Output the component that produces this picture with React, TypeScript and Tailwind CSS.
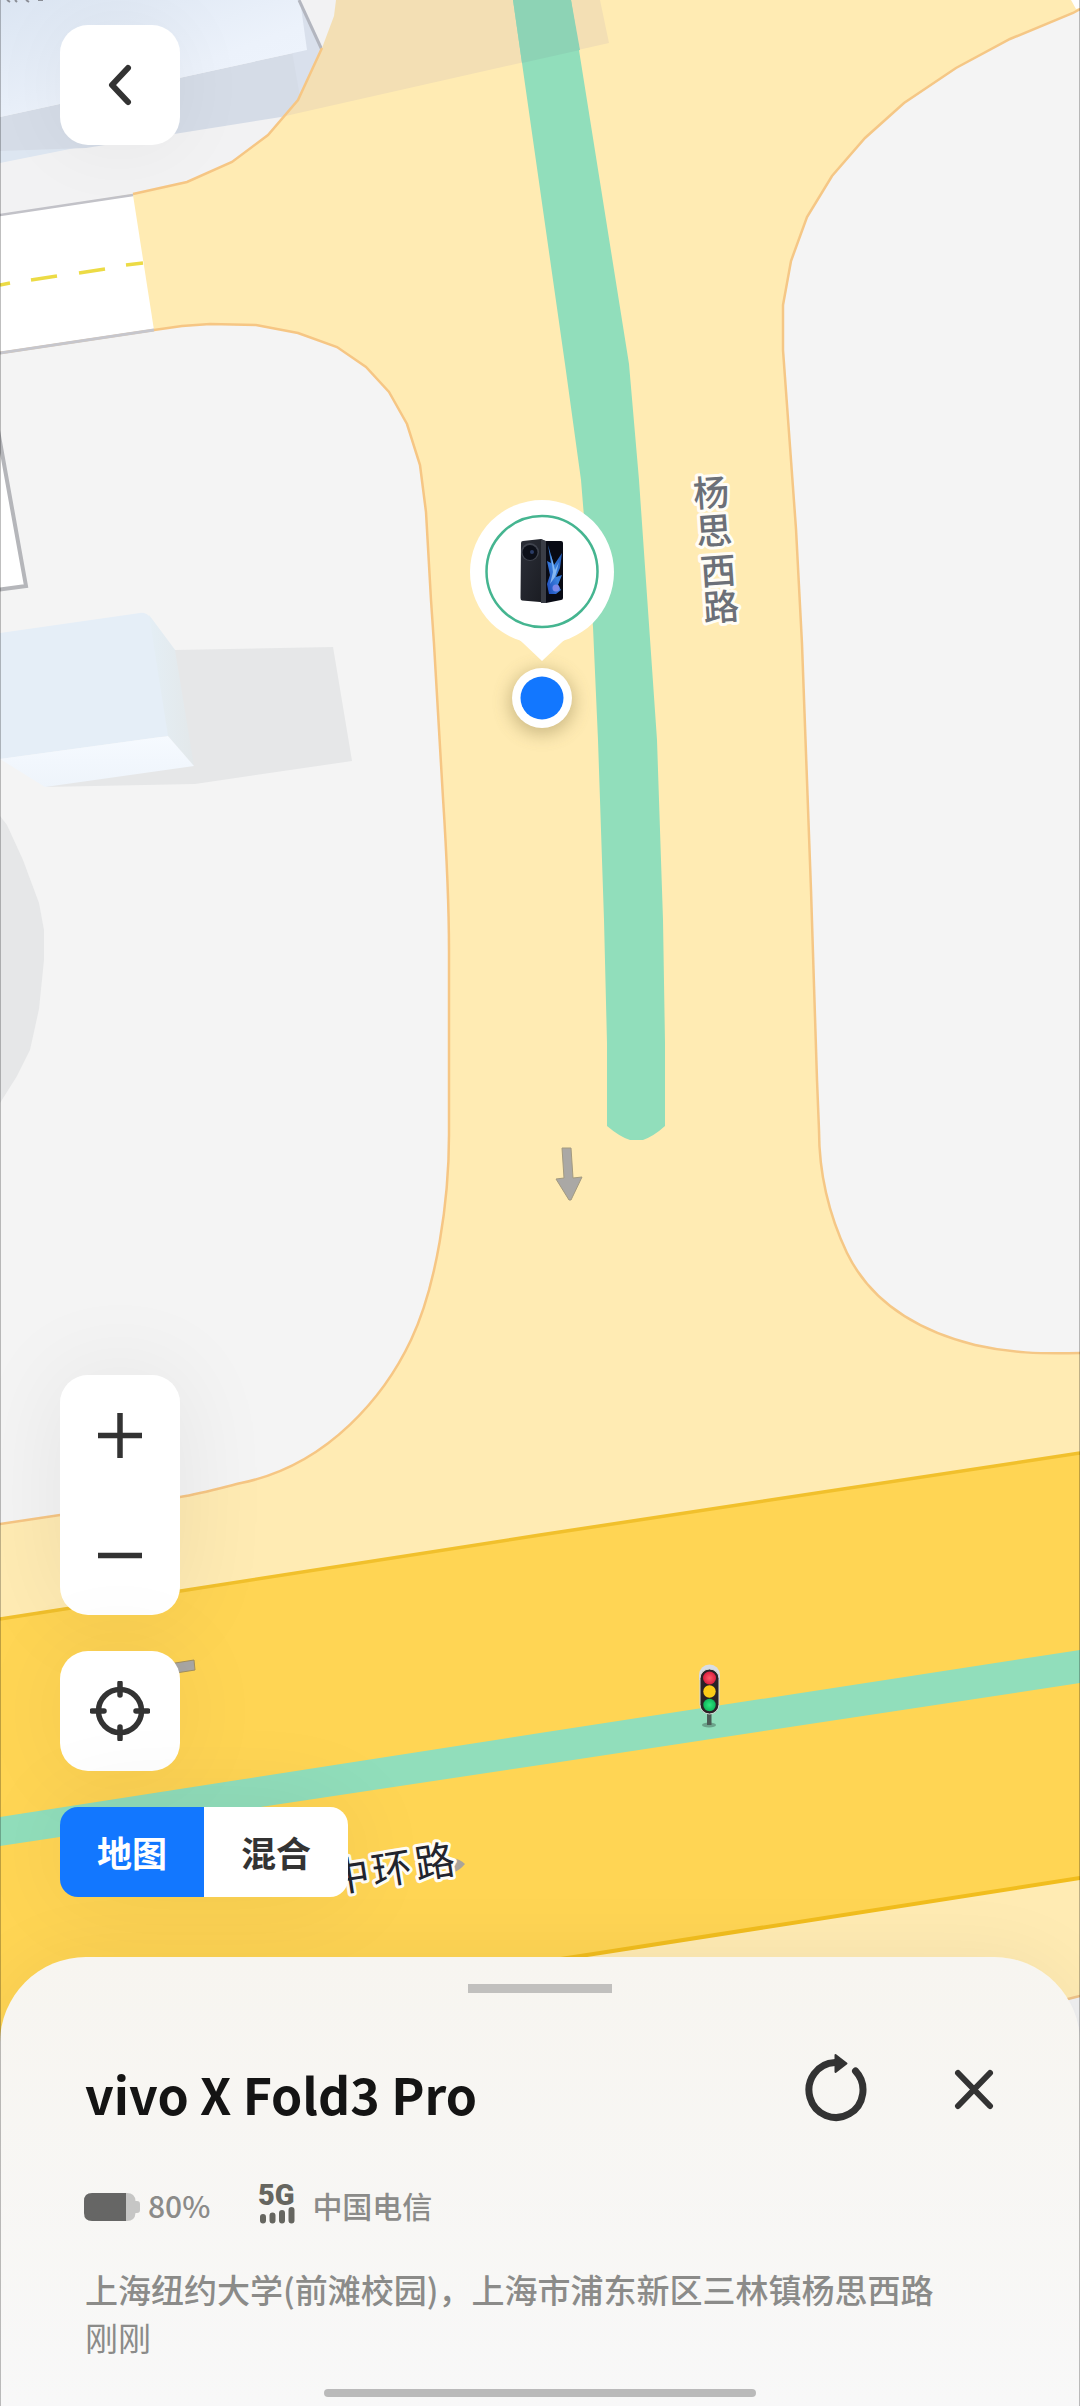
import { useState } from "react";

const LEFT_BLOCK =
  "M0 353 L154 330 L182 326 L210 324 L256 325 L298 333 L337 347 L366 367 L389 392 L407 424 L420 465 L426 512 L431 600 L434 644 L443 798 C447 860 449 900 449 951 V1135 C449 1200 437 1285 411 1340 C386 1393 330 1465 241 1483 C221 1488 200 1494 180 1497 L0 1524";
const RIGHT_BLOCK =
  "M1080 9 L1073 13 L1010 39 L956 68 L904 103 L865 138 L832 176 L807 217 L791 261 L783 305 L783 350 L796 529 L802 644 L811 890 L817 1080 L819 1130 C819 1175 829 1215 847 1253 C870 1300 915 1330 975 1345 C1010 1353 1040 1354 1080 1353";
const TOP_BLOCK_EDGE =
  "M336 0 L334 16 L322 48 L298 100 L268 135 L232 162 L187 182 L133 194";

function StreetMap() {
  return (
    <svg
      className="absolute inset-0 h-full w-full"
      viewBox="0 0 1080 2406"
      preserveAspectRatio="xMidYMin slice"
      role="img"
      aria-label="地图"
    >
      <defs>
        <linearGradient id="roof" x1="0" y1="0" x2="1" y2="1">
          <stop offset="0" stopColor="#dbe5f2" />
          <stop offset="0.6" stopColor="#ecf2fb" />
          <stop offset="1" stopColor="#eff5fe" />
        </linearGradient>
        <linearGradient id="wall" x1="0" y1="0" x2="1" y2="0">
          <stop offset="0" stopColor="#e4eef5" />
          <stop offset="1" stopColor="#e3e8ea" />
        </linearGradient>
        <linearGradient id="front" x1="0" y1="0" x2="0" y2="1">
          <stop offset="0" stopColor="#f6faff" />
          <stop offset="1" stopColor="#eef4fb" />
        </linearGradient>
        <linearGradient id="phoneBack" x1="0" y1="0" x2="1" y2="1">
          <stop offset="0" stopColor="#2c2f38" />
          <stop offset="1" stopColor="#191b21" />
        </linearGradient>
        <linearGradient id="wing" x1="1" y1="0" x2="0" y2="1">
          <stop offset="0" stopColor="#1c4fb0" />
          <stop offset="0.5" stopColor="#3b83e0" />
          <stop offset="1" stopColor="#1b46b8" />
        </linearGradient>
        <radialGradient id="lampRed">
          <stop offset="0" stopColor="#ff5a68" />
          <stop offset="1" stopColor="#dc1f3f" />
        </radialGradient>
        <radialGradient id="lampGreen">
          <stop offset="0" stopColor="#2fe87f" />
          <stop offset="1" stopColor="#0fb65c" />
        </radialGradient>
        <filter id="soft" x="-50%" y="-50%" width="200%" height="200%">
          <feGaussianBlur stdDeviation="9" />
        </filter>
        <clipPath id="topBlock">
          <path d={`${TOP_BLOCK_EDGE} L0 215 V0 Z`} />
        </clipPath>
      </defs>

      <rect width="1080" height="2406" fill="#ffebb3" />

      {/* shadow cast over the junction */}
      <path d="M330 0 H600 L609 43 L281 117 L240 100 Z" fill="#f3dfb4" />

      {/* north-west block and its tower */}
      <path d={`${TOP_BLOCK_EDGE} L0 215 V0 Z`} fill="#f2f2f3" />
      <g clipPath="url(#topBlock)">
        <path d="M0 150 L90 145 L0 163 Z" fill="#dde6f1" />
        <path d="M0 117 L307 50 L322 48 L340 104 L281 117 L86 148 L0 151 Z" fill="#d5dce7" />
        <path d="M300 0 L322 50 L300 97 L290 40 Z" fill="#d9e0ec" />
        <path d="M0 0 H300 L307 50 L0 117 Z" fill="url(#roof)" />
        <path d="M299 0 L322 50" stroke="#b3b6bf" strokeWidth="3" />
      </g>
      <path d="M322 48 L298 100 L268 135 L232 162 L187 182 L133 194" fill="none" stroke="#f6c684" strokeWidth="2.5" />
      <path d="M7 0 l3 2 M15 0 l2 2 M26 0 l3 2 M38 0 h5" stroke="#8b8e96" strokeWidth="2" />

      {/* side street */}
      <path d="M0 215 L133 195 L154 330 L0 353 Z" fill="#ffffff" />
      <path d="M0 215 L133 195" stroke="#c2c2c8" strokeWidth="2.5" />
      <path d="M0 285 L10 283 M31 280 L57 276 M79 273 L105 269 M126 265 L143 263" stroke="#ecdb45" strokeWidth="3.5" />

      {/* west block */}
      <path d={`${LEFT_BLOCK} Z`} fill="#f4f4f4" />
      <path d={LEFT_BLOCK} fill="none" stroke="#f6c684" strokeWidth="2.5" />
      <path d="M0 353 L154 330" stroke="#c6c6cc" strokeWidth="3" />
      <path d="M-3 425 L26 586 L-3 590 Z" fill="#ffffff" stroke="#b5b6ba" strokeWidth="4" />

      <path d="M175 650 L333 647 L352 761 L195 784 L45 787 L160 740 Z" fill="#e6e7e8" />
      <path d="M0 633 L140 613 Q146 612 151 618 L175 650 L168 736 L0 759 Z" fill="#e5eef7" />
      <path d="M149 615 L175 650 L194 766 L168 736 Z" fill="url(#wall)" />
      <path d="M0 759 L168 736 L194 766 L45 787 Z" fill="url(#front)" />
      <path d="M0 816 L7 825 L23 860 L39 903 L44 930 V960 L39 1009 L30 1050 L17 1076 L0 1103 Z" fill="#e6e7e8" />

      {/* east block */}
      <path d="M1071 0 L1076 9 L1080 8 V0 Z" fill="#ffffff" />
      <path d={`${RIGHT_BLOCK} Z`} fill="#f4f4f4" />
      <path d={RIGHT_BLOCK} fill="none" stroke="#f5c786" strokeWidth="2.5" />
      <path d="M1060 2001 L1080 1996 V2100 H1060 Z" fill="#f1f1f2" />
      <path d="M1060 2001 L1080 1996" stroke="#f0c48a" strokeWidth="2.5" />

      {/* ring road */}
      <path d="M0 1619 L540 1535 L1080 1453 V1878 L0 2045 Z" fill="#ffd554" />
      <path d="M0 1619 L540 1535 L1080 1453" fill="none" stroke="#f1c02c" strokeWidth="3.5" />
      <path d="M0 2044 L600 1953 L1080 1878" fill="none" stroke="#f1bd1d" strokeWidth="4" />
      <path d="M0 1817 L540 1733 L1080 1650 V1683 L540 1765 L0 1846 Z" fill="#91debb" />

      {/* traffic on the north-south road */}
      <path
        d="M513 0 L565 364 L581 480 L593 627 L598 740 L604 920 L607 1043 V1126 Q620 1137 630 1140 H643 Q654 1136 665 1126 V1043 L663 920 L657 740 L639 480 L629 364 L571 0 Z"
        fill="#91debb"
      />
      <path d="M513 0 H571 L580 50 L522 63 Z" fill="#8dd3b5" />

      {/* direction arrows */}
      <path d="M562 1148 L571 1148 L573 1178 L582 1177 L571 1200 H569 L556 1179 L564 1178 Z" fill="#aaa8a5" stroke="#a39a80" />
      <path d="M150 1667 L194 1660 L195 1670 L151 1677 Z" fill="#a9a7a5" stroke="#a39060" />
      <path d="M452 1858 Q460 1859 465 1864 Q460 1870 453 1873 Z" fill="#aaa49a" />

      {/* street names */}
      <g
        className="text-[36px] font-medium"
        fontFamily="'Noto Sans CJK SC', sans-serif"
        textAnchor="middle"
        fill="#6c7078"
        stroke="#fffdf6"
        strokeWidth="6"
        strokeLinejoin="round"
        paintOrder="stroke"
      >
        <text transform="translate(712 506) rotate(-4)">杨</text>
        <text transform="translate(715 544) rotate(-4)">思</text>
        <text transform="translate(719 584) rotate(-4)">西</text>
        <text transform="translate(722 620) rotate(-4)">路</text>
      </g>
      <g
        className="text-[40px]"
        fontFamily="'Noto Sans CJK SC', sans-serif"
        textAnchor="middle"
        fill="#22252e"
        stroke="#fffdf6"
        strokeWidth="6"
        strokeLinejoin="round"
        paintOrder="stroke"
      >
        <text transform="translate(352 1890) rotate(-9)">中</text>
        <text transform="translate(394 1883) rotate(-9)">环</text>
        <text transform="translate(437 1876) rotate(-9)">路</text>
      </g>

      {/* traffic light */}
      <ellipse cx="709" cy="1725" rx="7" ry="2.5" fill="#5d8a76" opacity="0.7" />
      <rect x="707" y="1712" width="4.5" height="13" fill="#4b5b55" />
      <path d="M699 1680 V1675 A10.5 10.5 0 0 1 720 1675 V1680 Z" fill="#d9dde3" />
      <rect x="700" y="1669" width="19" height="45" rx="9.5" fill="#2a2226" stroke="#d5dcd8" strokeWidth="1" />
      <circle cx="709.5" cy="1678" r="6.5" fill="url(#lampRed)" />
      <circle cx="709.5" cy="1691.5" r="6.2" fill="#fccb17" />
      <circle cx="709.5" cy="1705" r="6.2" fill="url(#lampGreen)" />

      {/* device pin */}
      <circle cx="542" cy="702" r="32" fill="#7a6a3a" opacity="0.4" filter="url(#soft)" />
      <circle cx="542" cy="572" r="72" fill="#ffffff" />
      <path d="M508 633 Q517 637 523 643 L542 661 L561 643 Q567 637 576 633 Z" fill="#ffffff" />
      <circle cx="542" cy="571.5" r="55.5" fill="none" stroke="#45b590" strokeWidth="2.5" />
      <circle cx="542" cy="698" r="30" fill="#ffffff" />
      <circle cx="542" cy="698" r="21.5" fill="#1277ff" />

      <path d="M521 543 Q521 541 523 541 L541 539 L545 541 V603 L540 602 L522 600.5 Q520.5 600 520.5 598 Z" fill="url(#phoneBack)" />
      <path d="M541 539 L546 541 V603 L541 603 Z" fill="#3a3d46" />
      <path d="M546 541 H561 Q563 541 563 543 V598 Q563 600 561 600 L546 603 Z" fill="#080a14" />
      <circle cx="530" cy="552" r="9" fill="#3f434d" />
      <circle cx="530" cy="552.5" r="7.5" fill="#0c0f18" />
      <circle cx="532" cy="552" r="2" fill="#2b3c66" />
      <path d="M548 545 L554 565 L562 553 L560 568 L556 577 L562 575 L558 585 L561 590 L556 594 L549 594 L547 584 L550 575 L547 561 L551 563 Z" fill="url(#wing)" />
      <path d="M551 555 L555 570 L559 562 L555 577 L550 584 L553 572 Z" fill="#a7d2fb" opacity="0.7" />
      <circle cx="556" cy="588" r="3.5" fill="#7b87e8" />
    </svg>
  );
}

const card = "flex items-center justify-center bg-white text-[#333333]";

export default function App() {
  const [mode, setMode] = useState("map");
  const tab = (on: boolean) =>
    on ? "flex-1 bg-[#1277ff] text-white" : "flex-1 bg-white text-[#333333]";

  return (
    <main className="relative flex min-h-screen flex-col overflow-hidden bg-[#ffebb3] font-['Noto_Sans_CJK_SC',sans-serif]">
      <StreetMap />

      <header className="relative px-[60px] pt-[25px]">
        <button type="button" aria-label="返回" className={`${card} size-[120px] rounded-[28px] shadow-[0_0_80px_rgba(0,0,0,0.05)]`}>
          <svg width="30" height="44" viewBox="0 0 30 44" fill="none" stroke="currentColor" strokeWidth="6" strokeLinecap="round" strokeLinejoin="round">
            <path d="M23 5 L7 22 L23 39" />
          </svg>
        </button>
      </header>

      <div className="relative mt-auto flex flex-col items-start gap-9 px-[60px] pb-[60px]">
        <div className="flex w-[120px] flex-col overflow-hidden rounded-[28px] shadow-[0_0_100px_rgba(0,0,0,0.07)]">
          <button type="button" aria-label="放大" className={`${card} h-[120px]`}>
            <svg width="46" height="46" viewBox="0 0 46 46" stroke="currentColor" strokeWidth="5.5">
              <path d="M1 23.5 H45 M23 1 V46" />
            </svg>
          </button>
          <button type="button" aria-label="缩小" className={`${card} h-[120px]`}>
            <svg width="46" height="46" viewBox="0 0 46 46" stroke="currentColor" strokeWidth="5.5">
              <path d="M1 23.5 H45" />
            </svg>
          </button>
        </div>

        <button type="button" aria-label="定位" className={`${card} size-[120px] rounded-[28px] shadow-[0_0_100px_rgba(0,0,0,0.06)]`}>
          <svg width="60" height="60" viewBox="0 0 60 60" fill="none" stroke="currentColor" strokeWidth="5.5">
            <circle cx="30" cy="30" r="21.5" />
            <path d="M30 2 V14 M30 46 V58 M2 30 H14 M46 30 H58" strokeLinecap="round" />
          </svg>
        </button>

        <div role="group" aria-label="地图类型" className="flex h-[90px] w-[288px] overflow-hidden rounded-[18px] text-[35px] font-bold shadow-[0_0_100px_rgba(0,0,0,0.07)]">
          <button type="button" aria-pressed={mode === "map"} onClick={() => setMode("map")} className={tab(mode === "map")}>
            地图
          </button>
          <button type="button" aria-pressed={mode === "mixed"} onClick={() => setMode("mixed")} className={tab(mode === "mixed")}>
            混合
          </button>
        </div>
      </div>

      <section className="relative rounded-t-[86px] bg-linear-to-b from-[#f7f5f0] to-[#f8f8f8] pb-[9px] pt-[27px] shadow-[0_0_80px_rgba(0,0,0,0.06)]">
        <div className="mx-auto h-[9px] w-36 bg-[#c1c0be]" />

        <div className="mt-16 flex items-start px-[85px]">
          <h1 className="flex-1 text-[50px] font-bold leading-[72px] text-[#141414]">vivo X Fold3 Pro</h1>
          <button type="button" aria-label="刷新" className="flex size-16 items-center justify-center text-[#333333]">
            <svg width="64" height="70" viewBox="0 0 64 70" fill="none" className="shrink-0">
              <path d="M51.5 17 A27 27.5 0 1 1 31 8.500" stroke="#333333" strokeWidth="7" strokeLinecap="round" />
              <path d="M31.5 1 L42.500 9.500 L31.500 18 Z" fill="#333333" stroke="#333333" strokeWidth="2" strokeLinejoin="round" />
            </svg>
          </button>
          <button type="button" aria-label="关闭" className="-mr-[11px] ml-[74px] flex size-16 items-center justify-center text-[#333333]">
            <svg width="42" height="42" viewBox="0 0 42 42" stroke="currentColor" strokeWidth="6" strokeLinecap="round">
              <path d="M5 5 L37 38 M37 5 L5 38" />
            </svg>
          </button>
        </div>

        <div className="mt-[50px] flex h-[46px] items-end px-[84px] text-[30px] font-medium leading-10 text-[#8b8b89]">
          <svg width="56" height="28" viewBox="0 0 56 28" className="mb-1 mr-2">
            <path d="M40 0 H43 Q51 0 51.5 8 H53 Q56 8 56 11 V17 Q56 20 53 20 H51.500 Q51 28 43 28 H40 Z" fill="#c6c6c5" />
            <path d="M8 0 H42 V28 H8 Q0 28 0 20 V8 Q0 0 8 0 Z" fill="#666665" />
          </svg>
          <span>80%</span>
          <svg width="44" height="44" viewBox="0 0 44 44" className="ml-12 mr-2.5 overflow-visible" role="img" aria-label="5G">
            <text x="0" y="24" fontFamily="Roboto, sans-serif" fill="#666660" className="text-[29px] font-black">5G</text>
            <path d="M5 36 V39.5 M14.500 34.5 V39.5 M24 32 V39.5 M33.500 29 V39.5" stroke="#666660" strokeWidth="6" strokeLinecap="round" />
          </svg>
          <span>中国电信</span>
        </div>

        <div className="mt-10 px-[85px] text-[33px] leading-[48px] text-[#8b8b89]">
          <p className="font-medium">上海纽约大学(前滩校园)，上海市浦东新区三林镇杨思西路</p>
          <p>刚刚</p>
        </div>

        <div className="mx-auto mt-7 h-2 w-[40%] rounded-full bg-[#bababa]" />
      </section>

      <div className="pointer-events-none absolute inset-0 border-x border-black/25" />
    </main>
  );
}
